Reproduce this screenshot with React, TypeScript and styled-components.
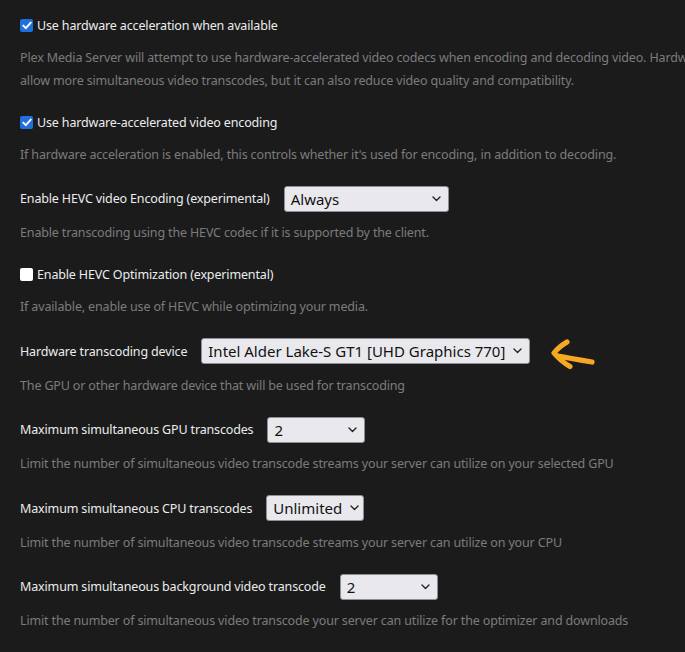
import styled, { createGlobalStyle } from 'styled-components'

const GlobalStyle = createGlobalStyle`
  html, body {
    margin: 0;
    padding: 0;
    background: #1b1b1c;
    overflow: hidden;
  }
  * { box-sizing: border-box; }
`

type Choice = {
  kind: 'check' | 'select'
  label: string
  checked?: boolean
  value?: string
  width?: number
  pointer?: boolean
  help: React.ReactNode
}

const settings: Choice[] = [
  {
    kind: 'check',
    label: 'Use hardware acceleration when available',
    checked: true,
    help: (
      <>
        Plex Media Server will attempt to use hardware-accelerated video codecs when encoding and decoding video. Hardware acceleration can make transcoding faster and
        <br />
        allow more simultaneous video transcodes, but it can also reduce video quality and compatibility.
      </>
    ),
  },
  {
    kind: 'check',
    label: 'Use hardware-accelerated video encoding',
    checked: true,
    help: "If hardware acceleration is enabled, this controls whether it's used for encoding, in addition to decoding.",
  },
  {
    kind: 'select',
    label: 'Enable HEVC video Encoding (experimental)',
    value: 'Always',
    width: 165,
    help: 'Enable transcoding using the HEVC codec if it is supported by the client.',
  },
  {
    kind: 'check',
    label: 'Enable HEVC Optimization (experimental)',
    checked: false,
    help: 'If available, enable use of HEVC while optimizing your media.',
  },
  {
    kind: 'select',
    label: 'Hardware transcoding device',
    value: 'Intel Alder Lake-S GT1 [UHD Graphics 770]',
    pointer: true,
    help: 'The GPU or other hardware device that will be used for transcoding',
  },
  {
    kind: 'select',
    label: 'Maximum simultaneous GPU transcodes',
    value: '2',
    width: 98,
    help: 'Limit the number of simultaneous video transcode streams your server can utilize on your selected GPU',
  },
  {
    kind: 'select',
    label: 'Maximum simultaneous CPU transcodes',
    value: 'Unlimited',
    width: 98,
    help: 'Limit the number of simultaneous video transcode streams your server can utilize on your CPU',
  },
  {
    kind: 'select',
    label: 'Maximum simultaneous background video transcode',
    value: '2',
    width: 98,
    help: 'Limit the number of simultaneous video transcode your server can utilize for the optimizer and downloads',
  },
]

function Chevron() {
  return (
    <svg width="9" height="6" viewBox="0 0 9 6">
      <path d="M1 1l3.5 3.5L8 1" fill="none" stroke="#222" strokeWidth="1.4" strokeLinecap="round" strokeLinejoin="round" />
    </svg>
  )
}

function Tick() {
  return (
    <svg width="10" height="9" viewBox="0 0 10 9">
      <path d="M1.3 4.6l2.5 2.6L8.8 1.6" fill="none" stroke="#fff" strokeWidth="1.9" strokeLinecap="round" strokeLinejoin="round" />
    </svg>
  )
}

// hand-drawn marker arrow next to the device picker
function PointerArrow() {
  return (
    <svg width="48" height="32" viewBox="0 0 48 32">
      <g fill="none" stroke="#f7a722" strokeWidth="5.2" strokeLinecap="round" strokeLinejoin="round">
        <path d="M19 4 C14 7 9 11 6 15 C10 20 16 25 22 28.5" />
        <path d="M10 18 C20 20 32 22 44 24" />
      </g>
    </svg>
  )
}

function App() {
  return (
    <>
      <GlobalStyle />
      <SettingsPage>
        {settings.map((s) => (
          <Setting key={s.label} $select={s.kind === 'select'}>
            <Header>
              {s.kind === 'check' ? (
                <CheckRow>
                  <Box $checked={!!s.checked}>{s.checked && <Tick />}</Box>
                  <Label>{s.label}</Label>
                </CheckRow>
              ) : (
                <>
                  <Label>{s.label}</Label>
                  <Select style={s.width ? { width: s.width } : undefined}>
                    <span>{s.value}</span>
                    <Chevron />
                  </Select>
                  {s.pointer && (
                    <Pointer>
                      <PointerArrow />
                    </Pointer>
                  )}
                </>
              )}
            </Header>
            <Help $select={s.kind === 'select'}>{s.help}</Help>
          </Setting>
        ))}
      </SettingsPage>
    </>
  )
}

const SettingsPage = styled.div`
  width: 1100px;
  padding: 12px 20px 30px;
  font-family: 'Noto Sans', 'Open Sans', sans-serif;
  font-size: 12.5px;
  letter-spacing: -0.15px;
`

const Setting = styled.div<{ $select: boolean }>`
  margin-top: ${(p) => (p.$select ? '20px' : '17.5px')};

  &:first-child {
    margin-top: 0;
  }
`

const Header = styled.div`
  height: 26px;
  display: flex;
  align-items: center;
  gap: 14px;
`

const CheckRow = styled.label`
  display: flex;
  align-items: center;
  gap: 4px;
`

const Box = styled.span<{ $checked: boolean }>`
  width: 13px;
  height: 13px;
  border-radius: 2px;
  display: flex;
  align-items: center;
  justify-content: center;
  background: ${(p) => (p.$checked ? '#1f6fde' : '#ffffff')};
`

const Label = styled.span`
  color: #ececec;
  white-space: nowrap;
`

const Select = styled.div`
  height: 26px;
  display: flex;
  align-items: center;
  justify-content: space-between;
  gap: 8px;
  padding: 0 7px 0 6px;
  border: 1px solid #8e8e96;
  border-radius: 3px;
  background: #e9e9ed;
  color: #111;
  font-size: 15px;
  letter-spacing: 0;
  white-space: nowrap;

  svg {
    flex: none;
  }
`

const Pointer = styled.span`
  display: flex;
  align-self: flex-start;
  margin-left: 4px;
`

const Help = styled.div<{ $select: boolean }>`
  margin-top: ${(p) => (p.$select ? '9.5px' : '7.5px')};
  color: #7b7b7d;
  line-height: 23px;
  white-space: nowrap;
`

export default App
